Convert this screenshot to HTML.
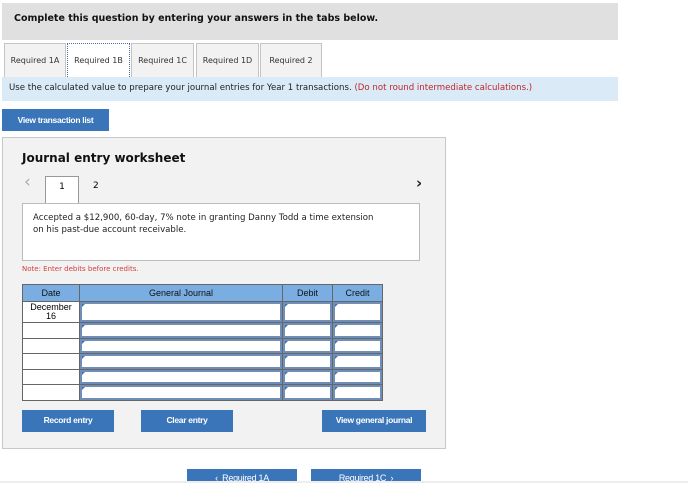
<!DOCTYPE html>
<html><head><style>
*{box-sizing:border-box;margin:0;padding:0}
body{width:688px;height:483px;background:#fff;font-family:Verdana,"DejaVu Sans",sans-serif;position:relative;overflow:hidden}
.a{position:absolute}
.hdr{left:2px;top:3px;width:616px;height:37px;background:#e0e0e0;font-size:9.5px;font-weight:bold;padding:10px 0 0 12px;color:#111}
.tab{top:43px;height:34px;background:#f2f2f2;border:1px solid #c4c4c4;border-bottom:none;font-size:8px;color:#333;text-align:center;line-height:34px}
.tab.on{background:#fff;border:1px dotted #4a6fa5;border-bottom:none}
.bar{left:2px;top:77px;width:616px;height:24px;background:#daeaf7;font-size:8.6px;padding:6px 0 0 7px;color:#222}
.btn{background:#3a75b9;color:#fff;font-family:"Liberation Sans",Arial,sans-serif;font-weight:bold;font-size:8.5px;text-align:center;letter-spacing:-0.3px}
.pnl{left:2px;top:137px;width:444px;height:312px;background:#f2f2f2;border:1px solid #c8c8c8}
table{border-collapse:collapse;position:absolute;left:22px;top:284px;font-family:"Liberation Sans",Arial,sans-serif;font-size:9px}
td,th{border:1px solid #666;padding:0}
th{background:#7aaee2;font-weight:normal;height:17px;color:#111}
td{background:#fff;height:15.5px;position:relative}
td.i{background:#fff;box-shadow:inset 0 0 0 2px #6f8fb8}
td.i:before{content:"";position:absolute;left:2px;top:2px;border-left:3px solid #3a75b9;border-bottom:3px solid transparent}
</style></head><body>
<div class="a hdr">Complete this question by entering your answers in the tabs below.</div>
<div class="a tab" style="left:4px;width:62px">Required 1A</div>
<div class="a tab on" style="left:67px;width:63px">Required 1B</div>
<div class="a tab" style="left:131px;width:63px">Required 1C</div>
<div class="a tab" style="left:196px;width:63px">Required 1D</div>
<div class="a tab" style="left:260px;width:62px">Required 2</div>
<div class="a bar">Use the calculated value to prepare your journal entries for Year 1 transactions. <span style="color:#c0262c">(Do not round intermediate calculations.)</span></div>
<div class="a btn" style="left:2px;top:109px;width:107px;height:22px;line-height:22px">View transaction list</div>
<div class="a pnl"></div>
<div class="a" style="left:22px;top:151px;font-size:12px;font-weight:bold;color:#111">Journal entry worksheet</div>
<div class="a" style="left:24px;top:172px;font-size:17px;color:#aaa">&lsaquo;</div>
<div class="a" style="left:45px;top:176px;width:34px;height:28px;background:#fff;border:1px solid #999;border-bottom:none;font-size:9px;text-align:center;line-height:20px">1</div>
<div class="a" style="left:93px;top:181px;font-size:9px">2</div>
<div class="a" style="left:416px;top:174px;font-size:15px;color:#222;font-weight:bold">&rsaquo;</div>
<div class="a" style="left:22px;top:203px;width:398px;height:58px;background:#fff;border:1px solid #bbb;font-size:8.6px;padding:8px 10px;line-height:12px;color:#222">Accepted a $12,900, 60-day, 7% note in granting Danny Todd a time extension<br>on his past-due account receivable.</div>
<div class="a" style="left:22px;top:265px;font-size:7px;color:#d04040">Note: Enter debits before credits.</div>
<table>
<tr><th style="width:57px">Date</th><th style="width:203px">General Journal</th><th style="width:50px">Debit</th><th style="width:50px">Credit</th></tr>
<tr><td style="height:21px;text-align:center;line-height:9px">December<br>16</td><td class="i"></td><td class="i"></td><td class="i"></td></tr>
<tr><td></td><td class="i"></td><td class="i"></td><td class="i"></td></tr>
<tr><td></td><td class="i"></td><td class="i"></td><td class="i"></td></tr>
<tr><td></td><td class="i"></td><td class="i"></td><td class="i"></td></tr>
<tr><td></td><td class="i"></td><td class="i"></td><td class="i"></td></tr>
<tr><td></td><td class="i"></td><td class="i"></td><td class="i"></td></tr>
</table>
<div class="a btn" style="left:22px;top:410px;width:92px;height:22px;line-height:21px">Record entry</div>
<div class="a btn" style="left:141px;top:410px;width:92px;height:22px;line-height:21px">Clear entry</div>
<div class="a btn" style="left:322px;top:410px;width:104px;height:22px;line-height:21px">View general journal</div>
<div class="a btn" style="left:187px;top:469px;width:110px;height:14px;line-height:18px;font-weight:normal;font-size:9px">&lsaquo;&nbsp;&nbsp;Required 1A</div>
<div class="a btn" style="left:311px;top:469px;width:110px;height:14px;line-height:18px;font-weight:normal;font-size:9px">Required 1C&nbsp;&nbsp;&rsaquo;</div>
<div class="a" style="left:0;top:481px;width:688px;height:2px;background:#eee"></div>
</body></html>
